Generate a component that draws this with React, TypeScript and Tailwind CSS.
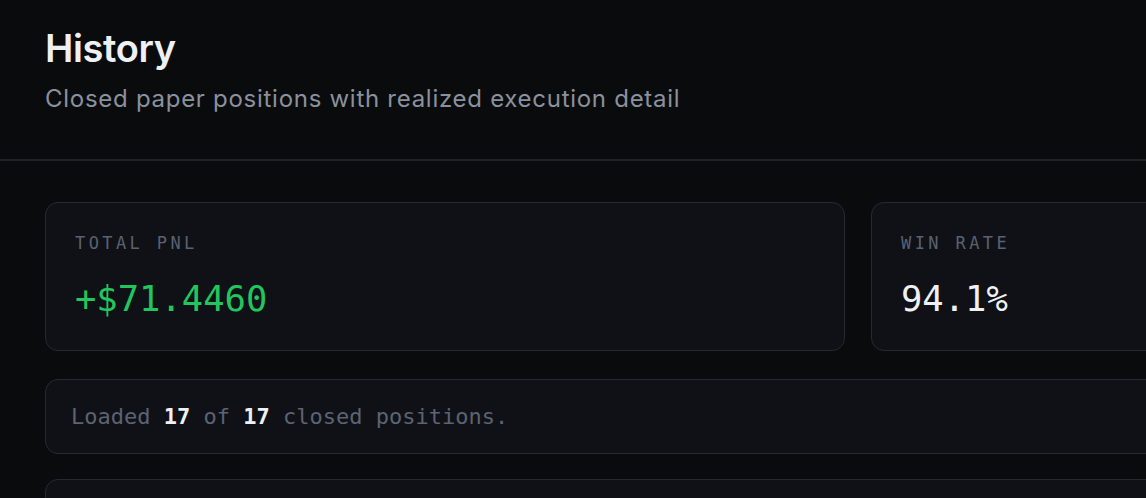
const mono = "font-['DejaVu_Sans_Mono','Liberation_Mono',monospace]";

function StatCard({ label, value, tone }: { label: string; value: string; tone: string }) {
  return (
    <div className="w-[800px] shrink-0 rounded-[13px] border border-[#242935] bg-[#0f1116] px-[29px] pt-[28px] pb-[29px]">
      <div className={`${mono} text-[17px] leading-[24px] tracking-[0.2em] text-[#5a6172]`}>{label}</div>
      <div className={`${mono} mt-[22px] text-[35.5px] leading-[44px] ${tone}`}>{value}</div>
    </div>
  );
}

export default function App() {
  return (
    <div className="h-[498px] w-[1146px] overflow-hidden bg-[#0a0b0d] font-['Inter','Noto_Sans',sans-serif]">
      <header className="border-b-2 border-[#1c212b] px-[45px] pt-[25px] pb-[44px]">
        <h1 className="text-[38px] leading-[46px] font-semibold tracking-[-0.01em] text-[#eef0f4]">History</h1>
        <p className="mt-[12px] text-[24px] leading-[32px] tracking-[0.03em] text-[#8a919e]">
          Closed paper positions with realized execution detail
        </p>
      </header>

      <main className="px-[45px] pt-[41px]">
        <div className="flex gap-[26px]">
          <StatCard label="TOTAL PNL" value="+$71.4460" tone="text-[#22c55e]" />
          <StatCard label="WIN RATE" value="94.1%" tone="text-[#eef0f4]" />
        </div>

        <div className="mt-[28px] w-[1200px] rounded-[13px] border border-[#242935] bg-[#0f1116] px-[25px] py-[21px]">
          <p className={`${mono} text-[22px] leading-[31px] text-[#5c6373]`}>
            Loaded <span className="font-bold text-[#eef0f4]">17</span> of{" "}
            <span className="font-bold text-[#eef0f4]">17</span> closed positions.
          </p>
        </div>

        <div className="mt-[25px] h-[80px] w-[1200px] rounded-[13px] border border-[#242935] bg-[#0f1116]" />
      </main>
    </div>
  );
}
